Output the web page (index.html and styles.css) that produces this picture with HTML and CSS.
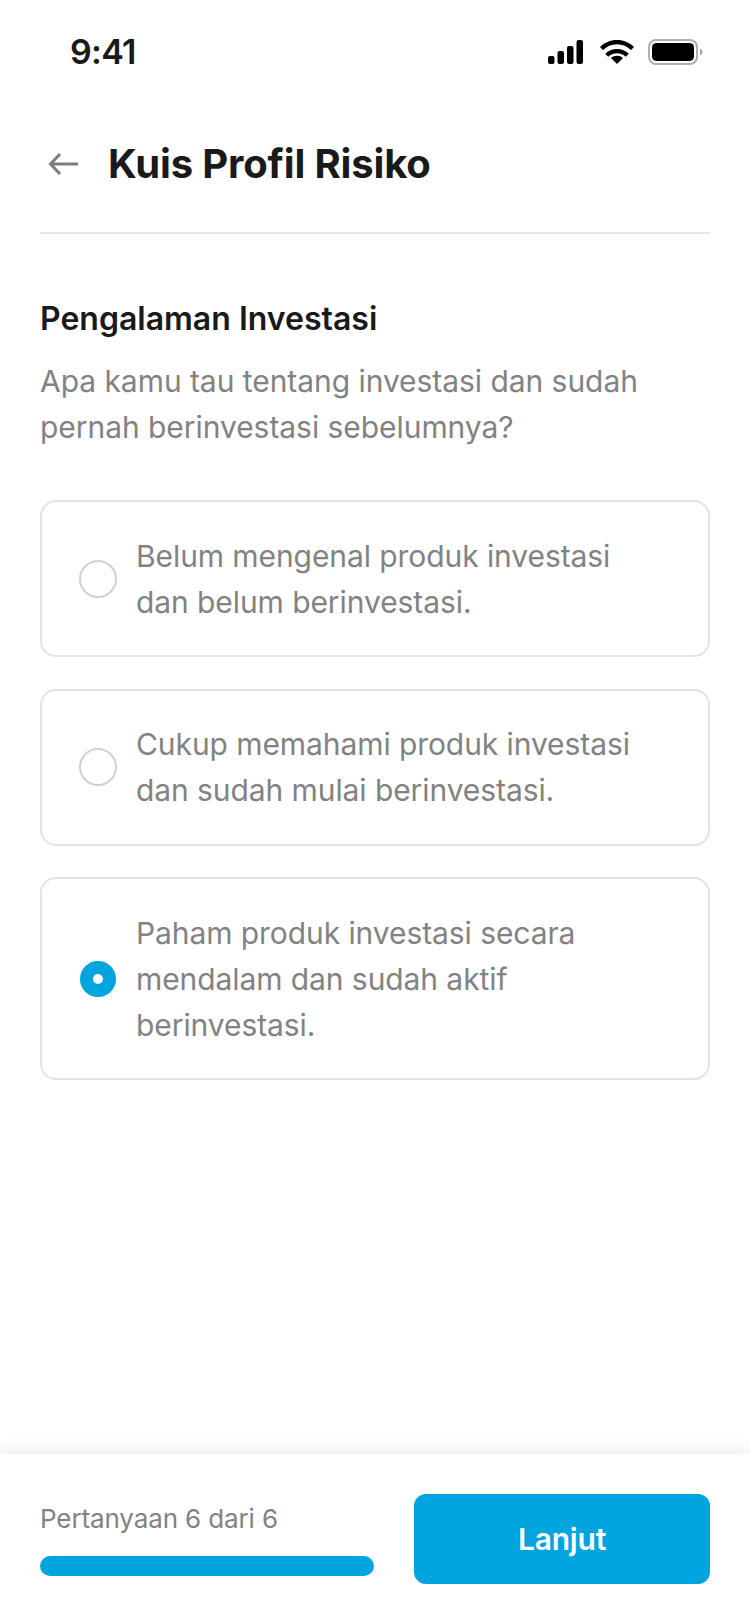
FILE: index.html
```html
<!DOCTYPE html>
<html lang="id">
<head>
<meta charset="utf-8">
<title>Kuis Profil Risiko</title>
<link rel="stylesheet" href="styles.css">
</head>
<body>
<div class="screen">
  <div class="status">
    <span class="time">9:41</span>
    <div class="status-icons">
      <svg class="ic-signal" width="35" height="24" viewBox="0 0 35 24"><rect x="0" y="16" width="6.500" height="8" rx="2"/><rect x="9.500" y="11" width="6.500" height="13" rx="2"/><rect x="19" y="6" width="6.500" height="18" rx="2"/><rect x="28.500" y="0" width="6.500" height="24" rx="2"/></svg>
      <svg class="ic-wifi" width="34" height="24" viewBox="0 0 34 24"><path d="M17 24l-6-6c3.300-3 8.700-3 12 0z"/><path d="M17 9c4.600 0 8.800 1.800 11.800 4.800l-3 3c-2.300-2.200-5.400-3.600-8.800-3.600s-6.500 1.400-8.800 3.600l-3-3C8.200 10.800 12.400 9 17 9z"/><path d="M17 0c6.700 0 12.800 2.700 17 7l-3 3C27.500 6.400 22.500 4.200 17 4.200S6.500 6.400 3 10L0 7C4.200 2.700 10.300 0 17 0z"/></svg>
      <svg class="ic-batt" width="55" height="26" viewBox="0 0 55 26"><rect x="1" y="1" width="48" height="24" rx="7" fill="none" stroke="#b0b0b0" stroke-width="2"/><rect x="4" y="4" width="42" height="18" rx="4.500" fill="#000"/><path d="M52 9.500c1.600.5 2.500 1.800 2.500 3.500s-.9 3-2.500 3.500z" fill="#a8a8a8"/></svg>
    </div>
  </div>
  <header class="nav">
    <svg class="back" width="32" height="24" viewBox="0 0 32 24"><path d="M30 12H3M12 2L2.500 12 12 22" fill="none" stroke="#7c7c7c" stroke-width="3"/></svg>
    <h1 class="title">Kuis Profil Risiko</h1>
  </header>
  <main class="content">
    <h2 class="heading">Pengalaman Investasi</h2>
    <p class="question">Apa kamu tau tentang investasi dan sudah pernah berinvestasi sebelumnya?</p>
    <div class="options">
      <div class="option"><span class="radio"></span><span class="opt-text">Belum mengenal produk investasi dan belum berinvestasi.</span></div>
      <div class="option"><span class="radio"></span><span class="opt-text">Cukup memahami produk investasi dan sudah mulai berinvestasi.</span></div>
      <div class="option"><span class="radio radio-on"></span><span class="opt-text">Paham produk investasi secara mendalam dan sudah aktif berinvestasi.</span></div>
    </div>
  </main>
  <footer class="footer">
    <div class="progress">
      <span class="count">Pertanyaan 6 dari 6</span>
      <div class="bar"></div>
    </div>
    <button class="next">Lanjut</button>
  </footer>
</div>
</body>
</html>
```
FILE: styles.css
```css
* { box-sizing: border-box; }
html, body { margin: 0; padding: 0; background: #fff; }
body { font-family: Inter, "Noto Sans", sans-serif; color: #1a1a1a; }
.screen { width: 750px; height: 1624px; display: flex; flex-direction: column; overflow: hidden; }
.status { height: 104px; flex: none; display: flex; justify-content: space-between; align-items: flex-start; padding: 30px 47px 0 70px; }
.time { font-size: 34px; font-weight: 600; line-height: 44px; letter-spacing: -0.7px; color: #1a1a1a; }
.status-icons { display: flex; align-items: center; padding-top: 9px; }
.ic-signal { margin-right: 17px; }
.ic-wifi { margin-right: 14px; }
.status-icons svg { display: block; fill: #000; }
.nav { margin: 0 40px; height: 130px; flex: none; display: flex; align-items: flex-start; gap: 28px; padding: 0 8px; border-bottom: 2px solid #e8e8e8; }
.back { margin-top: 48px; flex: none; }
.title { margin: 0; padding-top: 32px; font-size: 40px; font-weight: 700; line-height: 56px; letter-spacing: -0.15px; color: #1a1a1a; }
.content { flex: 1; padding: 65px 40px 0; }
.heading { margin: 0; font-size: 32px; font-weight: 600; line-height: 40px; color: #1a1a1a; }
.question { margin: 19px 0 0; font-size: 30px; line-height: 46px; letter-spacing: -0.05px; color: #828282; }
.options { margin-top: 50px; display: flex; flex-direction: column; gap: 31.5px; }
.option { display: flex; align-items: center; gap: 20px; padding: 30.5px 38px; border: 2px solid #e3e3e3; border-radius: 16px; }
.radio { flex: none; width: 38px; height: 38px; margin: 0 -1px; border-radius: 50%; border: 2px solid #d0d0d0; background: #fff; }
.radio-on { width: 36px; height: 36px; margin: 0; border: 13px solid #00a5e0; }
.opt-text { font-size: 30px; line-height: 46px; letter-spacing: -0.08px; color: #828282; }
.footer { flex: none; height: 170px; display: flex; align-items: flex-start; gap: 40px; padding: 40px 40px 0; background: #fff; box-shadow: 0 -4px 16px rgba(0,0,0,.08); }
.progress { width: 334px; flex: none; }
.count { display: block; font-size: 26px; line-height: 32px; letter-spacing: -0.12px; color: #828282; margin-top: 9px; }
.bar { margin-top: 21px; height: 20px; border-radius: 10px; background: #00a5e0; }
.next { width: 296px; height: 90px; border: 0; border-radius: 12px; background: #00a5e0; color: #fff; font-family: inherit; font-size: 30px; font-weight: 600; letter-spacing: -0.2px; }
```
